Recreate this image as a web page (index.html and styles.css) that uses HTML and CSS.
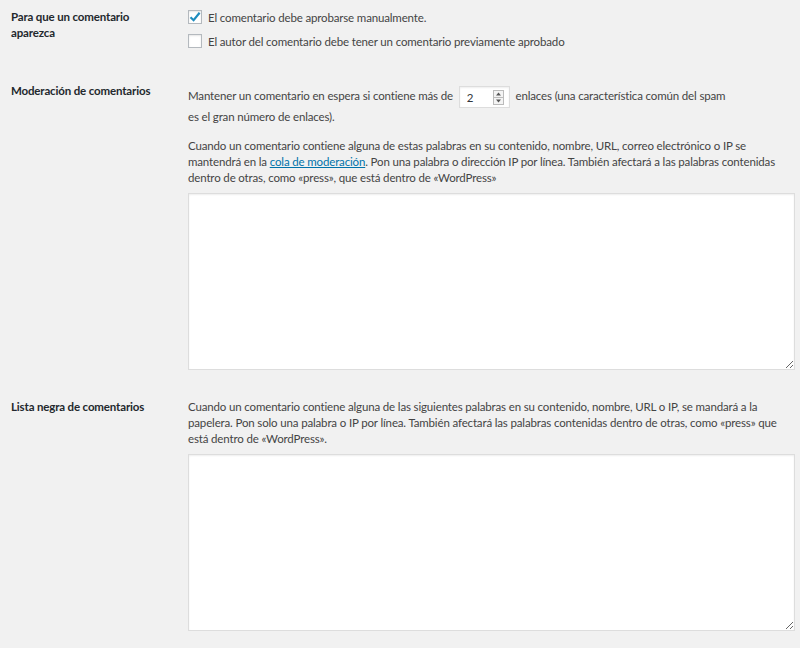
FILE: index.html
```html
<!DOCTYPE html>
<html lang="es">
<head>
<meta charset="utf-8">
<link rel="stylesheet" href="styles.css">
</head>
<body>
<div class="table">
  <div class="row row-first">
    <div class="th">Para que un comentario aparezca</div>
    <div class="td">
      <label class="check"><span class="box"><svg width="14" height="14" viewBox="0 0 14 14"><path d="M2.5 7.2 L5.6 10.2 L11.6 2.8" fill="none" stroke="#1e8cbe" stroke-width="2.2"/></svg></span>El comentario debe aprobarse manualmente.</label>
      <label class="check"><span class="box"></span>El autor del comentario debe tener un comentario previamente aprobado</label>
    </div>
  </div>
  <div class="row row-mod">
    <div class="th th-mod">Moderación de comentarios</div>
    <div class="td td-mod">
      <p class="inline-p">Mantener un comentario en espera si contiene más de <span class="num"><input type="text" value="2"><svg class="spin" width="11" height="15" viewBox="0 0 11 15"><rect x="0.5" y="0.5" width="10" height="14" fill="#f4f4f4" stroke="#bbb"/><line x1="1" y1="7.5" x2="10" y2="7.5" stroke="#bbb"/><path d="M3 5.5 L5.5 2.5 L8 5.5 Z" fill="#555"/><path d="M3 9.5 L5.5 12.5 L8 9.5 Z" fill="#555"/></svg></span> enlaces (una característica común del spam<br>es el gran número de enlaces).</p>
      <p class="desc">Cuando un comentario contiene alguna de estas palabras en su contenido, nombre, URL, correo electrónico o IP se mantendrá en la <a href="#">cola de moderación</a>. Pon una palabra o dirección IP por línea. También afectará a las palabras contenidas dentro de otras, como «press», que está dentro de «WordPress»</p>
      <textarea class="ta"></textarea>
    </div>
  </div>
  <div class="row row-black">
    <div class="th th-black">Lista negra de comentarios</div>
    <div class="td">
      <p class="desc desc-black">Cuando un comentario contiene alguna de las siguientes palabras en su contenido, nombre, URL o IP, se mandará a la papelera. Pon solo una palabra o IP por línea. También afectará las palabras contenidas dentro de otras, como «press» que está dentro de «WordPress».</p>
      <textarea class="ta"></textarea>
    </div>
  </div>
</div>
</body>
</html>
```
FILE: styles.css
```css
html, body {
  margin: 0;
  padding: 0;
  background: #f1f1f1;
  font-family: Lato, "Liberation Sans", Arial, sans-serif;
  font-size: 11.5px;
  letter-spacing: -0.15px;
  color: #444;
}
.table {
  padding-left: 11px;
  padding-right: 5px;
}
.row {
  display: grid;
  grid-template-columns: 177px 1fr;
}
.th {
  font-weight: bold;
  color: #23282d;
  line-height: 16px;
  padding-right: 16px;
}
.row-first .th { padding-top: 9px; }
.row-first .td { padding-top: 9px; }
.check {
  display: flex;
  align-items: center;
  height: 16px;
  margin-bottom: 8px;
  gap: 6px;
  color: #444;
}
.box {
  width: 12px;
  height: 12px;
  border: 1px solid #b4b9be;
  background: #fff;
  box-shadow: inset 0 1px 2px rgba(0,0,0,0.1);
  display: flex;
  align-items: center;
  justify-content: center;
  flex: none;
}
.box svg { flex: none; }
.row-mod { margin-top: 26px; }
.th-mod { padding-top: 0; }
.td-mod { padding-top: 8px; }
.inline-p {
  margin: 0;
  margin-top: -5px;
  line-height: 18px;
}
.num {
  position: relative;
  display: inline-block;
  vertical-align: middle;
  margin: 0 3px;
}
.num input {
  width: 51px;
  height: 22px;
  box-sizing: border-box;
  border: 1px solid #ddd;
  background: #fff;
  font: inherit;
  color: #32373c;
  padding: 0 0 0 7px;
  margin: 0;
  outline: none;
  box-shadow: inset 0 1px 2px rgba(0,0,0,0.07);
}
.spin {
  position: absolute;
  right: 6px;
  top: 4px;
}
.desc {
  margin: 12px 0 0;
  line-height: 16px;
}
a { color: #0073aa; }
.ta {
  display: block;
  width: 100%;
  height: 177px;
  box-sizing: border-box;
  margin: 7px 0 0;
  border: 1px solid #ddd;
  background: #fff;
  box-shadow: inset 0 1px 2px rgba(0,0,0,0.07);
  resize: vertical;
}
.row-black { margin-top: 29px; }
.desc-black { margin-top: 0; }
.th-black { padding-top: 0; }
```
